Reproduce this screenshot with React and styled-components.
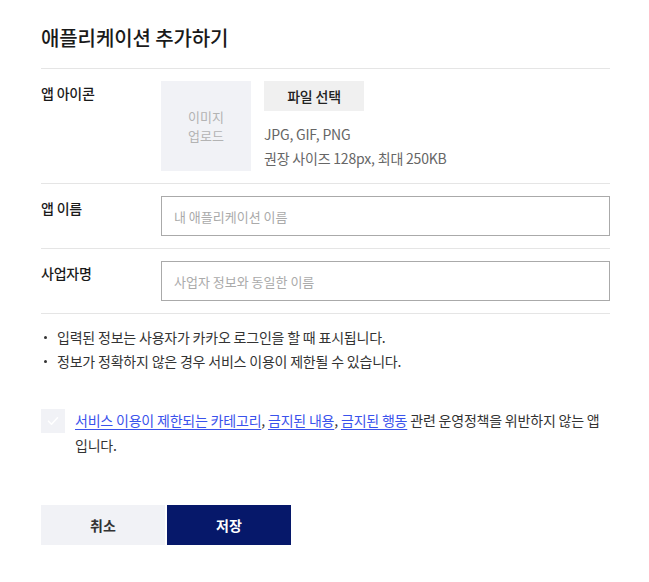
import React from 'react';
import styled, { createGlobalStyle } from 'styled-components';

const GlobalStyle = createGlobalStyle`
  body {
    margin: 0;
    background: #fff;
    font-family: 'Noto Sans CJK KR', 'Noto Sans', sans-serif;
    color: #222;
  }
`;

const Page = styled.div`
  width: 569px;
  padding: 24px 0 40px 41px;
`;

const Title = styled.h1`
  margin: 0 0 16px;
  font-size: 20px;
  line-height: 28px;
  font-weight: 500;
  letter-spacing: -0.1px;
  color: #1a1a1a;
`;

const Form = styled.div`
  border-bottom: 1px solid #e5e5e5;
`;

const Row = styled.div`
  display: flex;
  border-top: 1px solid #e5e5e5;
  padding: 12px 0;
`;

const Label = styled.div`
  width: 120px;
  flex-shrink: 0;
  font-size: 14px;
  line-height: 24px;
  font-weight: 500;
  letter-spacing: -0.2px;
  color: #1a1a1a;
`;

const Field = styled.div`
  flex: 1;
  display: flex;
  gap: 13px;
`;

const UploadBox = styled.div`
  width: 90px;
  height: 90px;
  background: #f1f2f6;
  display: flex;
  align-items: center;
  justify-content: center;
  text-align: center;
  font-size: 13px;
  line-height: 19px;
  color: #b3b3b3;
`;

const UploadInfo = styled.div`
  display: flex;
  flex-direction: column;
  align-items: flex-start;
`;

const FileButton = styled.button`
  width: 100px;
  height: 30px;
  border: none;
  background: #f0f0f0;
  font-family: inherit;
  font-size: 14px;
  font-weight: 500;
  letter-spacing: -0.2px;
  color: #222;
  margin-bottom: 11px;
  padding: 0;
`;

const Hint = styled.div`
  font-size: 14px;
  line-height: 24px;
  letter-spacing: -0.2px;
  color: #666;
`;

const TextInput = styled.input`
  flex: 1;
  height: 40px;
  box-sizing: border-box;
  border: 1px solid #aaa;
  padding: 0 12px;
  font-family: inherit;
  font-size: 13px;
  color: #222;
  outline: none;

  &::placeholder {
    color: #aaa;
  }
`;

const Notes = styled.ul`
  list-style: none;
  margin: 0;
  padding: 11px 0 0;
`;

const Note = styled.li`
  position: relative;
  padding-left: 16px;
  font-size: 14px;
  line-height: 24px;
  letter-spacing: -0.2px;
  color: #333;

  &::before {
    content: '';
    position: absolute;
    left: 3px;
    top: 11px;
    width: 3px;
    height: 3px;
    border-radius: 50%;
    background: #333;
  }
`;

const Agreement = styled.label`
  display: flex;
  gap: 10px;
  margin-top: 35px;
  font-size: 14px;
  line-height: 25px;
  letter-spacing: -0.2px;
  color: #333;
`;

const CheckBox = styled.span`
  flex-shrink: 0;
  width: 24px;
  height: 24px;
  margin-top: 1px;
  background: #f1f2f6;
  display: flex;
  align-items: center;
  justify-content: center;
`;

const PolicyLink = styled.a`
  color: #3a52ec;
  text-decoration: underline;
  text-underline-offset: 3px;
`;

const Buttons = styled.div`
  display: flex;
  gap: 2px;
  margin-top: 47px;
`;

const ActionButton = styled.button`
  width: 124px;
  height: 40px;
  border: none;
  padding: 0;
  font-family: inherit;
  font-size: 14px;
  font-weight: 700;
  background: ${(p) => (p.$primary ? '#06186a' : '#f1f2f6')};
  color: ${(p) => (p.$primary ? '#fff' : '#333')};
`;

export default function App() {
  return (
    <>
      <GlobalStyle />
      <Page>
        <Title>애플리케이션 추가하기</Title>
        <Form>
          <Row>
            <Label>앱 아이콘</Label>
            <Field>
              <UploadBox>
                이미지
                <br />
                업로드
              </UploadBox>
              <UploadInfo>
                <FileButton>파일 선택</FileButton>
                <Hint>JPG, GIF, PNG</Hint>
                <Hint>권장 사이즈 128px, 최대 250KB</Hint>
              </UploadInfo>
            </Field>
          </Row>
          <Row>
            <Label>앱 이름</Label>
            <Field>
              <TextInput placeholder="내 애플리케이션 이름" />
            </Field>
          </Row>
          <Row>
            <Label>사업자명</Label>
            <Field>
              <TextInput placeholder="사업자 정보와 동일한 이름" />
            </Field>
          </Row>
        </Form>
        <Notes>
          <Note>입력된 정보는 사용자가 카카오 로그인을 할 때 표시됩니다.</Note>
          <Note>정보가 정확하지 않은 경우 서비스 이용이 제한될 수 있습니다.</Note>
        </Notes>
        <Agreement>
          <CheckBox>
            <svg width="14" height="14" viewBox="0 0 14 14" fill="none">
              <path d="M2.5 7.2l3 3 6-6.4" stroke="#fff" strokeWidth="1.6" strokeLinecap="round" strokeLinejoin="round" />
            </svg>
          </CheckBox>
          <span>
            <PolicyLink href="#">서비스 이용이 제한되는 카테고리</PolicyLink>,{' '}
            <PolicyLink href="#">금지된 내용</PolicyLink>,{' '}
            <PolicyLink href="#">금지된 행동</PolicyLink> 관련 운영정책을 위반하지 않는 앱입니다.
          </span>
        </Agreement>
        <Buttons>
          <ActionButton>취소</ActionButton>
          <ActionButton $primary>저장</ActionButton>
        </Buttons>
      </Page>
    </>
  );
}
